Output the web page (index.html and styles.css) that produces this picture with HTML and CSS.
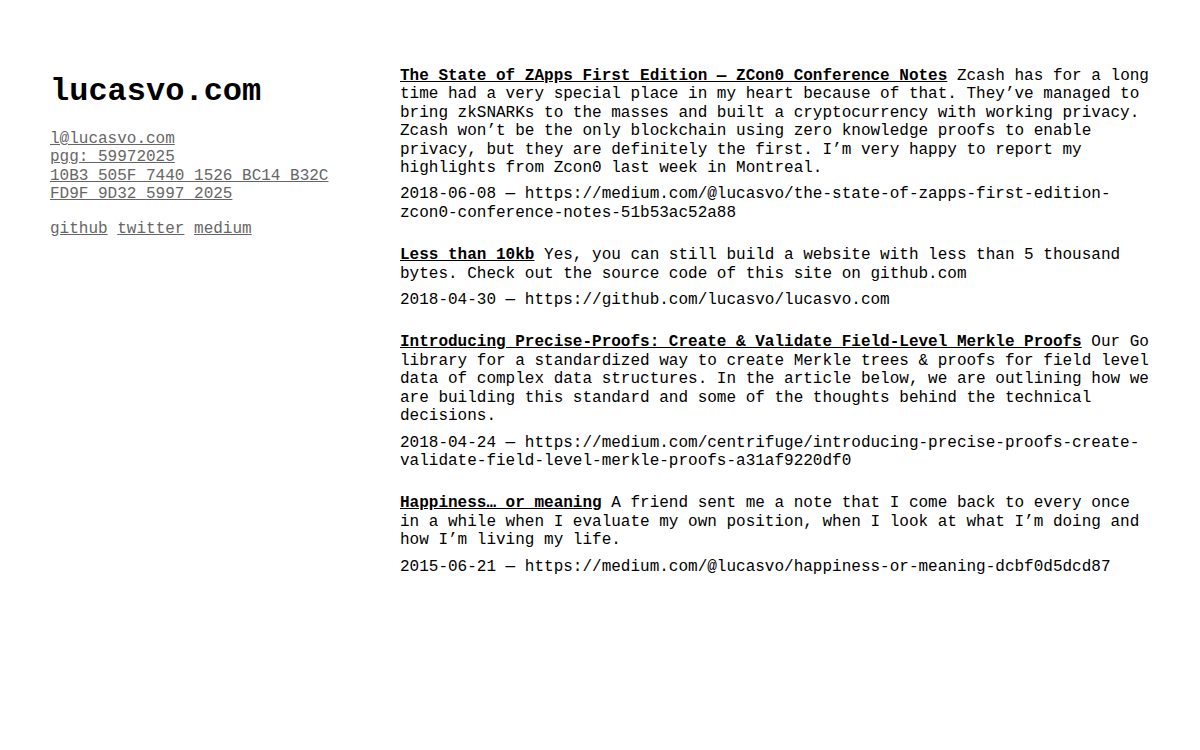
FILE: index.html
```html
<!DOCTYPE html>
<html lang="en">
<head>
<meta charset="utf-8">
<title>lucasvo.com</title>
<link rel="stylesheet" href="styles.css">
</head>
<body>
<div class="page">
  <aside class="side">
    <h1 class="logo">lucasvo.com</h1>
    <div class="contact">
      <a href="#">l@lucasvo.com</a><br>
      <a href="#">pgg: 59972025<br>10B3 505F 7440 1526 BC14 B32C<br>FD9F 9D32 5997 2025</a>
    </div>
    <div class="social">
      <a href="#">github</a> <a href="#">twitter</a> <a href="#">medium</a>
    </div>
  </aside>
  <main class="posts">
    <article class="post">
      <p class="desc"><a class="ptitle" href="#">The State of ZApps First Edition — ZCon0 Conference Notes</a> Zcash has for a long time had a very special place in my heart because of that. They’ve managed to bring zkSNARKs to the masses and built a cryptocurrency with working privacy. Zcash won’t be the only blockchain using zero knowledge proofs to enable privacy, but they are definitely the first. I’m very happy to report my highlights from Zcon0 last week in Montreal.</p>
      <p class="meta">2018-06-08 — https://medium.com/@lucasvo/the-state-of-zapps-first-edition-zcon0-conference-notes-51b53ac52a88</p>
    </article>
    <article class="post">
      <p class="desc"><a class="ptitle" href="#">Less than 10kb</a> Yes, you can still build a website with less than 5 thousand bytes. Check out the source code of this site on github.com</p>
      <p class="meta">2018-04-30 — https://github.com/lucasvo/lucasvo.com</p>
    </article>
    <article class="post">
      <p class="desc"><a class="ptitle" href="#">Introducing Precise-Proofs: Create &amp; Validate Field-Level Merkle Proofs</a> Our Go library for a standardized way to create Merkle trees &amp; proofs for field level data of complex data structures. In the article below, we are outlining how we are building this standard and some of the thoughts behind the technical decisions.</p>
      <p class="meta">2018-04-24 — https://medium.com/centrifuge/introducing-precise-proofs-create-validate-field-level-merkle-proofs-a31af9220df0</p>
    </article>
    <article class="post">
      <p class="desc"><a class="ptitle" href="#">Happiness… or meaning</a> A friend sent me a note that I come back to every once in a while when I evaluate my own position, when I look at what I’m doing and how I’m living my life.</p>
      <p class="meta">2015-06-21 — https://medium.com/@lucasvo/happiness-or-meaning-dcbf0d5dcd87</p>
    </article>
  </main>
</div>
</body>
</html>
```

FILE: styles.css
```css
html, body {
  margin: 0;
  padding: 0;
  background: #fff;
}
body {
  font-family: "Liberation Mono", "Courier New", monospace;
  font-size: 16px;
  line-height: 18.4px;
  color: #000;
}
.page {
  display: flex;
  padding: 67px 50px 0 50px;
}
.side {
  width: 350px;
  flex: none;
}
.logo {
  font-size: 32px;
  line-height: 36px;
  font-weight: bold;
  margin: 7px 0 20px 0;
}
.side a {
  color: #666;
  text-decoration: underline;
}
.contact {
  margin-bottom: 16px;
}
.posts {
  width: 750px;
  flex: none;
}
.post {
  margin-bottom: 24px;
}
.desc {
  margin: 0 0 8px 0;
}
.meta {
  margin: 0;
  overflow-wrap: break-word;
}
.ptitle {
  color: #000;
  font-weight: bold;
  text-decoration: underline;
}
```
